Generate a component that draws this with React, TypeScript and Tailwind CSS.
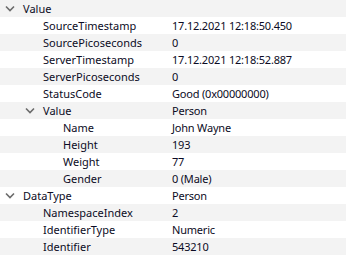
type Row = { label: string; value: string; depth: number; open?: boolean };

const rows: Row[] = [
  { label: 'Value', value: '', depth: 0, open: true },
  { label: 'SourceTimestamp', value: '17.12.2021 12:18:50.450', depth: 1 },
  { label: 'SourcePicoseconds', value: '0', depth: 1 },
  { label: 'ServerTimestamp', value: '17.12.2021 12:18:52.887', depth: 1 },
  { label: 'ServerPicoseconds', value: '0', depth: 1 },
  { label: 'StatusCode', value: 'Good (0x00000000)', depth: 1 },
  { label: 'Value', value: 'Person', depth: 1, open: true },
  { label: 'Name', value: 'John Wayne', depth: 2 },
  { label: 'Height', value: '193', depth: 2 },
  { label: 'Weight', value: '77', depth: 2 },
  { label: 'Gender', value: '0 (Male)', depth: 2 },
  { label: 'DataType', value: 'Person', depth: 0, open: true },
  { label: 'NamespaceIndex', value: '2', depth: 1 },
  { label: 'IdentifierType', value: 'Numeric', depth: 1 },
  { label: 'Identifier', value: '543210', depth: 1 },
];

const indent = ['pl-[23px]', 'pl-[43px]', 'pl-[63px]'];
const chevronLeft = ['left-[5px]', 'left-[25px]', 'left-[45px]'];

function Chevron({ className }: { className: string }) {
  return (
    <svg width="10" height="7" viewBox="0 0 10 7" className={`absolute top-[5px] ${className}`}>
      <polyline points="1,1.5 5,5.5 9,1.5" fill="none" stroke="#6b6b6b" strokeWidth="1.6" />
    </svg>
  );
}

export default function App() {
  return (
    <div
      className="w-[346px] h-[256px] bg-white overflow-hidden text-[11px] text-[#0b0b24]"
      style={{ fontFamily: '"Noto Sans", "Open Sans", sans-serif' }}
    >
      {rows.map((r, i) => (
        <div
          key={i}
          className={`flex h-[17px] items-center leading-[17px] ${i % 2 === 0 ? 'bg-[#f3f3f3]' : 'bg-white'}`}
        >
          <div className="relative w-[172px] h-[17px] shrink-0 whitespace-nowrap">
            {r.open && <Chevron className={chevronLeft[r.depth]} />}
            <span className={`block ${indent[r.depth]}`}>{r.label}</span>
          </div>
          <div className="whitespace-nowrap tracking-[-0.2px]">{r.value}</div>
        </div>
      ))}
    </div>
  );
}
